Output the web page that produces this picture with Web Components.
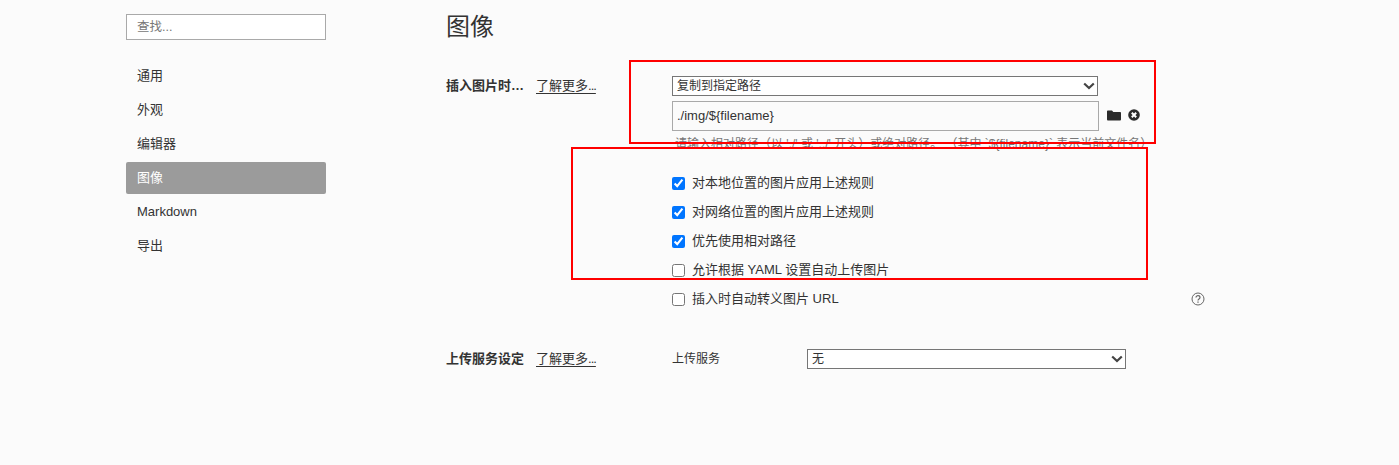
<!DOCTYPE html>
<html lang="zh">
<head>
<meta charset="utf-8">
<title>图像</title>
<style>
  html, body { margin: 0; height: 100%; background: #fbfbfb; }
  body { font: 13px "Liberation Sans", "Noto Sans CJK SC", sans-serif; color: #333; overflow: hidden; }
</style>
</head>
<body>
<pref-app>
  <pref-nav slot="nav">
    <nav-item>通用</nav-item>
    <nav-item>外观</nav-item>
    <nav-item>编辑器</nav-item>
    <nav-item active>图像</nav-item>
    <nav-item>Markdown</nav-item>
    <nav-item>导出</nav-item>
  </pref-nav>
  <h-title>图像</h-title>
  <pref-section heading="插入图片时…">
    <pref-select value="复制到指定路径"></pref-select>
    <path-input value="./img/${filename}"></path-input>
    <pref-hint>请输入相对路径（以 './' 或 '../' 开头）或绝对路径。 （其中 `${filename}` 表示当前文件名）</pref-hint>
    <check-row checked>对本地位置的图片应用上述规则</check-row>
    <check-row checked>对网络位置的图片应用上述规则</check-row>
    <check-row checked>优先使用相对路径</check-row>
    <check-row>允许根据 YAML 设置自动上传图片</check-row>
    <check-row help>插入时自动转义图片 URL</check-row>
  </pref-section>
  <pref-section heading="上传服务设定" class="upload">
    <upload-row></upload-row>
  </pref-section>
  <red-box slot="overlay" style="left:629px;top:60px;width:523px;height:80px"></red-box>
  <red-box slot="overlay" style="left:571px;top:147px;width:573px;height:129px"></red-box>
</pref-app>

<script>
const define = (name, css, html, init) => {
  customElements.define(name, class extends HTMLElement {
    connectedCallback() {
      if (this.shadowRoot) return;
      this.attachShadow({ mode: 'open' });
      this.shadowRoot.innerHTML = `<style>${css}</style>${typeof html === 'function' ? html(this) : html}`;
      if (init) init(this);
    }
  });
};

// Chevron drawn into the select, same as the browser's own arrow
const chevron = "url(\"data:image/svg+xml,%3Csvg xmlns='http://www.w3.org/2000/svg' width='14' height='10'%3E%3Cpath d='M2.2 2.5 7 7l4.8-4.5' fill='none' stroke='%23444' stroke-width='2.2'/%3E%3C/svg%3E\")";

define('pref-app', `
  :host { display: flex; position: relative; height: 465px; width: 1399px; box-sizing: border-box; padding: 14px 0 0 126px; }
  main { margin-left: 120px; width: 780px; }
`, `<slot name="nav"></slot><main><slot></slot></main><slot name="overlay"></slot>`);

define('pref-nav', `
  :host { display: block; width: 200px; flex: none; }
  input { display: block; box-sizing: border-box; width: 200px; height: 26px; margin: 0 0 20px; padding: 0 10px;
    border: 1px solid #a9a9a9; background: #fff; font: inherit; font-size: 12.5px; outline: 0; border-radius: 0; }
  input::placeholder { color: #777; }
  ::slotted(nav-item) { margin-bottom: 2px; }
`, `<input placeholder="查找...">
<slot></slot>`);

define('nav-item', `
  :host { display: block; height: 32px; line-height: 32px; padding: 0 11px; border-radius: 2px; color: #333; }
  :host([active]) { background: #9b9b9b; color: #fff; }
`, `<slot></slot>`);

define('h-title', `
  :host { display: block; font-size: 24px; line-height: 28px; color: #333; margin: -1px 0 0; height: 35px; }
`, `<slot></slot>`);

define('pref-section', `
  :host { display: flex; margin-top: 28px; }
  :host(.upload) { margin-top: 36px; }
  header { width: 226px; flex: none; display: flex; gap: 12px; line-height: 18px; padding-top: 1px; align-self: flex-start; }
  b { font-weight: bold; white-space: nowrap; width: 78px; }
  a { color: #333; text-decoration: underline; text-underline-offset: 3px; white-space: nowrap; }
  i { font-style: normal; letter-spacing: -1px; }
  div { flex: 1; min-width: 0; }
`, el => `<header><b>${el.getAttribute('heading')}</b><a>了解更多<i>...</i></a></header><div><slot></slot></div>`);

const selectCss = `
  :host { display: block; }
  select { display: block; height: 20px; box-sizing: border-box; padding: 0 24px 0 4px; margin: 0; font: inherit; font-size: 12px; color: #333;
    border: 1px solid #767676; border-radius: 0; background: #fff ${chevron} no-repeat right 1px center; appearance: none; outline: 0; }
`;

define('pref-select', selectCss + `select { width: 426px; }`,
  el => `<select><option>${el.getAttribute('value')}</option></select>`);

define('path-input', `
  :host { display: flex; align-items: center; margin-top: 5px; }
  input { width: 427px; height: 30px; box-sizing: border-box; border: 1px solid #a9a9a9; background: #fbfbfb; padding: 0 4px 2px; font: inherit; color: #333; border-radius: 0; outline: 0; }
  svg { display: block; flex: none; margin-bottom: 2px; }
  .folder { margin-left: 8px; }
  .clear { margin-left: 7px; width: 12px; height: 12px; }
`, el => `<input value="${el.getAttribute('value')}">
  <svg class="folder" width="14" height="12" viewBox="0 0 14 12"><path d="M1 1.500h4l1.300 1.500H13c.5 0 1 .4 1 1v6.500c0 .5-.5 1-1 1H1c-.5 0-1-.5-1-1V2.500c0-.6.500-1 1-1z" fill="#2b2b2b"/></svg>
  <svg class="clear" viewBox="0 0 12 12"><circle cx="6" cy="6" r="5.800" fill="#2b2b2b"/><path d="M3.800 3.800l4.400 4.400M8.200 3.800l-4.400 4.400" stroke="#fff" stroke-width="2"/></svg>`);

define('pref-hint', `
  :host { display: block; margin: 4px 0 15px 3px; font-size: 12px; line-height: 18px; height: 18px; color: #777; white-space: nowrap; }
`, `<slot></slot>`);

define('check-row', `
  :host { display: flex; align-items: center; height: 29px; position: relative; width: 533px; }
  input { width: 13px; height: 13px; margin: 2px 7px 0 0; accent-color: #0075ff; }
  span { margin-bottom: 2px; }
  svg { position: absolute; right: 0; top: 8px; }
`, el => `<input type="checkbox" ${el.hasAttribute('checked') ? 'checked' : ''}><span><slot></slot></span>
  ${el.hasAttribute('help') ? `<svg width="14" height="14" viewBox="0 0 14 14" fill="none" stroke="#666"><circle cx="7" cy="7" r="6"/><path d="M5 5.500C5 3 9 3 9 5.500c0 1.500-2 1.500-2 3" stroke-width="1.200"/><path d="M7 9.500v1.300" stroke-width="1.300"/></svg>` : ''}`);

define('upload-row', `
  :host { display: flex; align-items: flex-start; height: 20px; }
  span { width: 135px; flex: none; font-size: 12px; line-height: 20px; }
`, `<span>上传服务</span><select-small></select-small>`);

define('select-small', selectCss + `select { width: 319px; }`, `<select><option>无</option></select>`);

// Red annotation boxes drawn over the screenshot
define('red-box', `
  :host { display: block; position: absolute; border: 2px solid #f00; pointer-events: none; }
`, ``);
</script>
</body>
</html>
